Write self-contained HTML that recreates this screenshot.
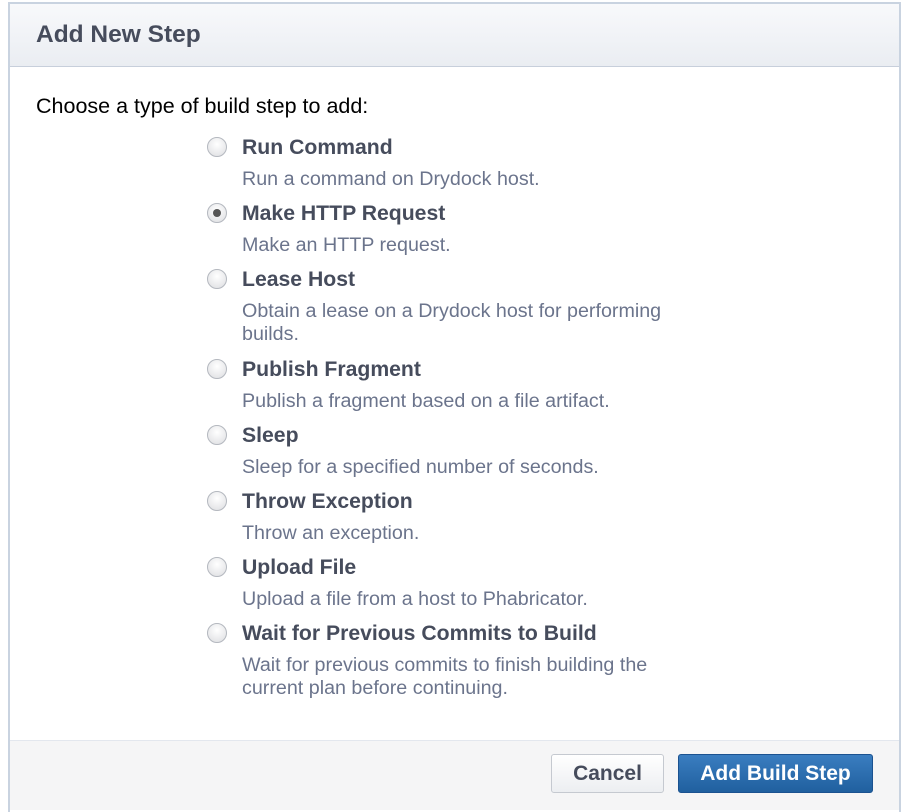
<!DOCTYPE html>
<html><head><meta charset="utf-8"><style>
*{margin:0;padding:0;box-sizing:border-box}
body{width:906px;height:804px;background:#fff;font-family:"Liberation Sans",Arial,sans-serif;position:relative;overflow:hidden}
.dlg{position:absolute;left:8px;top:2px;width:893px;height:810px;border:2px solid #c9d3e0;border-bottom:none;background:#fff}
.hd{position:absolute;left:0;top:0;right:0;height:63px;background:linear-gradient(#f8f9fb,#eaedf2);border-bottom:1px solid #c7cfdb}
.hd span{position:absolute;left:26px;top:17px;font-size:24.5px;font-weight:bold;color:#464c5c}
.intro{position:absolute;left:36px;top:94px;font-size:21.5px;color:#000}
.radio{position:absolute;left:207px;width:20px;height:20px;border-radius:50%;border:1px solid #b4b8bf;background:radial-gradient(circle at 50% 35%,#fff,#dcdde0)}
.radio.on::after{content:"";position:absolute;left:5px;top:5px;width:8px;height:8px;border-radius:50%;background:#555}
.t{position:absolute;left:242px;font-size:21.2px;font-weight:bold;color:#464c5c}
.d{position:absolute;left:242px;font-size:19.7px;color:#6b748c;line-height:23px}
.ft{position:absolute;left:10px;top:740px;width:889px;height:70px;background:#f5f5f6;border-top:1px solid #e3e7ee}
.b{position:absolute;top:754px;height:39px;border-radius:3px;font-size:21px;font-weight:bold;text-align:center;line-height:37px}
.c{left:551px;width:113px;background:linear-gradient(#fff,#eceef1);border:1px solid #c5c9d0;color:#464c5c}
.a{left:678px;width:195px;background:linear-gradient(#3a7dc0,#20609f);border:1px solid #1b5290;color:#fff}
</style></head><body>
<div class="dlg"><div class="hd"><span>Add New Step</span></div></div>
<div class="intro">Choose a type of build step to add:</div>

<div class="radio" style="top:137px"></div><div class="t" style="top:136px">Run Command</div><div class="d" style="top:168px">Run a command on Drydock host.</div>
<div class="radio on" style="top:203px"></div><div class="t" style="top:202px">Make HTTP Request</div><div class="d" style="top:234px">Make an HTTP request.</div>
<div class="radio" style="top:269px"></div><div class="t" style="top:268px">Lease Host</div><div class="d" style="top:300px">Obtain a lease on a Drydock host for performing<br>builds.</div>
<div class="radio" style="top:359px"></div><div class="t" style="top:358px">Publish Fragment</div><div class="d" style="top:390px">Publish a fragment based on a file artifact.</div>
<div class="radio" style="top:425px"></div><div class="t" style="top:424px">Sleep</div><div class="d" style="top:456px">Sleep for a specified number of seconds.</div>
<div class="radio" style="top:491px"></div><div class="t" style="top:490px">Throw Exception</div><div class="d" style="top:522px">Throw an exception.</div>
<div class="radio" style="top:557px"></div><div class="t" style="top:556px">Upload File</div><div class="d" style="top:588px">Upload a file from a host to Phabricator.</div>
<div class="radio" style="top:623px"></div><div class="t" style="top:622px">Wait for Previous Commits to Build</div><div class="d" style="top:654px">Wait for previous commits to finish building the<br>current plan before continuing.</div>

<div class="ft"></div>
<div class="b c">Cancel</div>
<div class="b a">Add Build Step</div>
</body></html>
